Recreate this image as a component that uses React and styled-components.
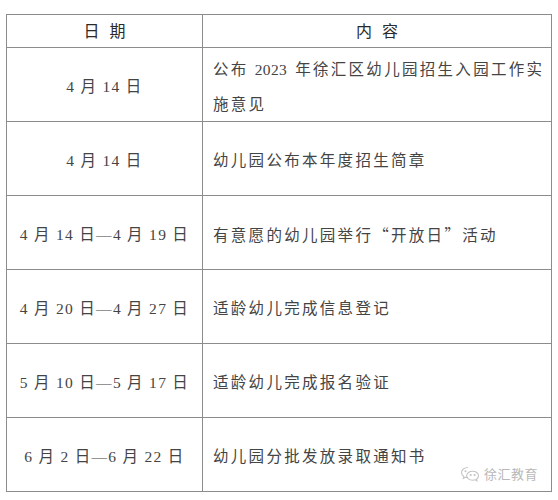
import React from 'react'
import styled, { createGlobalStyle } from 'styled-components'

const Global = createGlobalStyle`
  html, body { margin: 0; padding: 0; background: #fff; }
  body {
    font-family: "Liberation Serif", "Noto Sans CJK SC", serif;
    color: #3c3c3c;
  }
`

const Page = styled.div`
  width: 558px;
  height: 500px;
  padding: 14px 0 0 6px;
  box-sizing: border-box;
  position: relative;
`

const Table = styled.div`
  width: 546px;
  display: grid;
  grid-template-columns: 196px minmax(0, 1fr);
  border-top: 1.5px solid #8c8c8c;
  border-left: 1.5px solid #8c8c8c;
  box-sizing: border-box;
`

const Cell = styled.div`
  height: ${p => (p.$head ? '33px' : '74px')};
  box-sizing: border-box;
  border-right: 1.5px solid #8c8c8c;
  border-bottom: 1.5px solid #8c8c8c;
  display: flex;
  align-items: center;
  justify-content: ${p => (p.$left ? 'flex-start' : 'center')};
  padding: ${p => (p.$head ? '0' : p.$left ? '4px 0 0 10px' : '4px 0 0 0')};
  font-size: ${p => (p.$head ? '16px' : '15.5px')};
  font-weight: 400;
  letter-spacing: ${p => (p.$left ? '2.3px' : '1.3px')};
  line-height: 35px;
  color: ${p => (p.$head ? '#2a2a2a' : '#444')};
  white-space: pre;
  overflow: hidden;
`

const Text = styled.span`
  display: block;
`

const HeadText = styled.span`
  letter-spacing: 10px;
  margin-right: -10px;
`

const Num = styled.span`
  letter-spacing: 0.3px;
  margin-right: 2px;
`

const Quote = styled.span`
  font-family: "Noto Sans CJK SC", sans-serif;
`

const Mark = styled.div`
  position: absolute;
  right: 20px;
  bottom: 17px;
  display: flex;
  align-items: center;
  gap: 4px;
  font-family: "Noto Sans CJK SC", sans-serif;
  font-size: 13px;
  color: #b8b8b8;
  letter-spacing: 0.5px;
`

const WeChat = () => (
  <svg width="20" height="16" viewBox="0 0 20 16" fill="none" stroke="#c4c4c4" strokeWidth="1.1">
    <path d="M8 1.5c-3.6 0-6.5 2.3-6.5 5.1 0 1.6.9 3 2.4 3.9l-.6 1.9 2.2-1.1c.8.2 1.6.4 2.5.4" />
    <path d="M12.6 5.2c3.2 0 5.9 2 5.9 4.6 0 1.4-.8 2.6-2 3.4l.5 1.6-1.9-1c-.8.2-1.6.4-2.5.4-3.2 0-5.9-2-5.9-4.5s2.7-4.5 5.9-4.5z" />
    <circle cx="5.5" cy="5.2" r="0.5" fill="#c4c4c4" />
    <circle cx="10.7" cy="9" r="0.5" fill="#c4c4c4" />
    <circle cx="14.6" cy="9" r="0.5" fill="#c4c4c4" />
  </svg>
)

const rows = [
  ['4 月 14 日', <>公布 <Num>2023</Num> 年徐汇区幼儿园招生入园工作实{'\n'}施意见</>],
  ['4 月 14 日', '幼儿园公布本年度招生简章'],
  ['4 月 14 日—4 月 19 日', <>有意愿的幼儿园举行<Quote>“</Quote>开放日<Quote>”</Quote>活动</>],
  ['4 月 20 日—4 月 27 日', '适龄幼儿完成信息登记'],
  ['5 月 10 日—5 月 17 日', '适龄幼儿完成报名验证'],
  ['6 月 2 日—6 月 22 日', '幼儿园分批发放录取通知书'],
]

export default function App() {
  return (
    <Page>
      <Global />
      <Table>
        <Cell $head><HeadText>日期</HeadText></Cell>
        <Cell $head><HeadText>内容</HeadText></Cell>
        {rows.map(([d, c], i) => (
          <React.Fragment key={i}>
            <Cell>{d}</Cell>
            <Cell $left><Text>{c}</Text></Cell>
          </React.Fragment>
        ))}
      </Table>
      <Mark>
        <WeChat />
        徐汇教育
      </Mark>
    </Page>
  )
}
